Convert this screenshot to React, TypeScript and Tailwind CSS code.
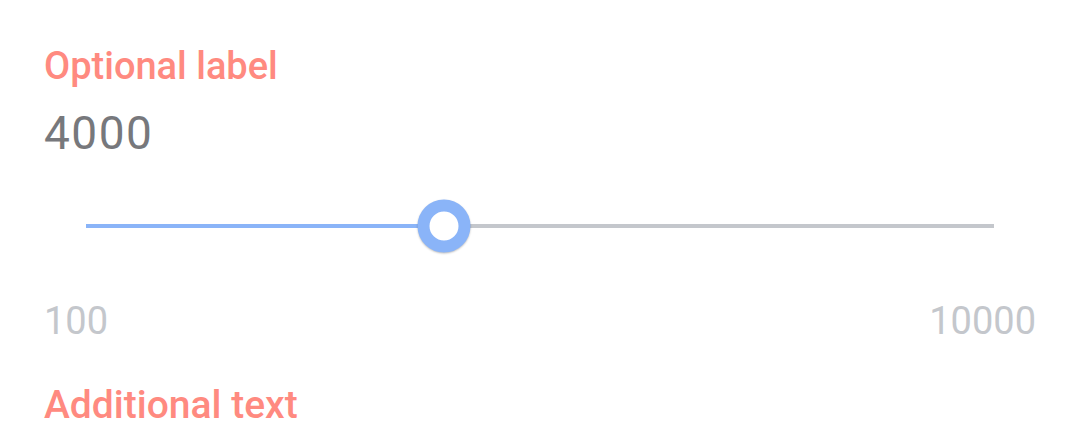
import React from "react";

export default function App() {
  const min = 100;
  const max = 10000;
  const value = 4000;
  const pct = ((value - min) / (max - min)) * 100;
  return (
    <div className="w-[1080px] h-[442px] bg-white font-['Roboto',sans-serif] pt-[42px] px-[44px] overflow-hidden">
      <div className="text-[38px] leading-[48px] font-medium text-[#ff8a80]">Optional label</div>
      <div className="mt-[15px] text-[46px] leading-[56px] font-normal tracking-[1.5px] text-[#77787c]">{value}</div>
      <div className="mt-[37px] h-[56px] px-[42px] flex items-center">
        <div className="relative w-full h-[4px] bg-[#c4c7cc]">
          <div className="absolute left-0 top-0 h-full bg-[#8ab4f8]" style={{ width: `${pct}%` }} />
          <div
            className="absolute top-1/2 -translate-x-1/2 -translate-y-1/2 w-[53px] h-[53px] rounded-full border-[12px] border-[#8ab4f8] bg-white shadow-[0_1px_2px_rgba(0,0,0,0.25)]"
            style={{ left: `${pct}%` }}
          />
        </div>
      </div>
      <div className="mt-[44px] flex justify-between text-[38px] leading-[46px] text-[#c4c7cc]">
        <span>{min}</span>
        <span>{max}</span>
      </div>
      <div className="mt-[37px] text-[39px] leading-[48px] font-medium text-[#ff8a80]">Additional text</div>
    </div>
  );
}
